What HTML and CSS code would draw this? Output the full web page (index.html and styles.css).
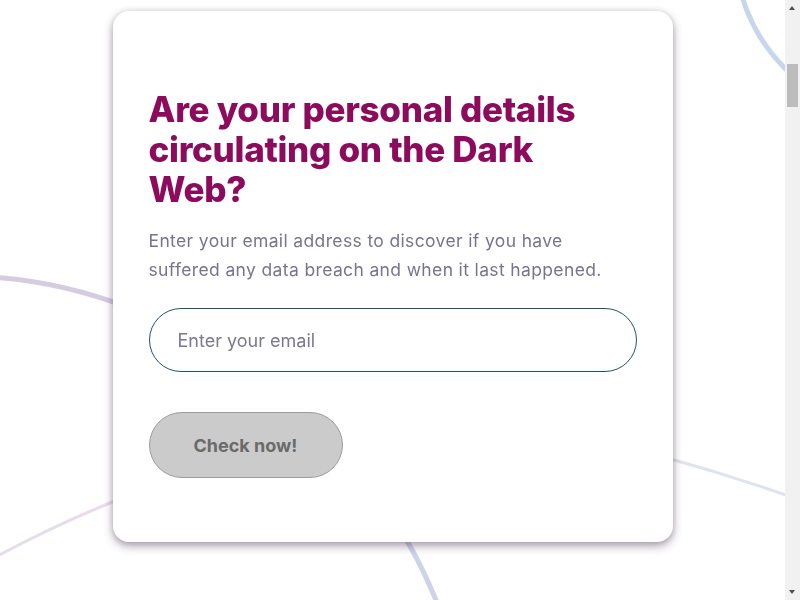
FILE: index.html
```html
<!DOCTYPE html>
<html lang="en">
<head>
<meta charset="utf-8">
<title>Dark Web Check</title>
<link rel="stylesheet" href="styles.css">
</head>
<body>
<svg class="rings" width="800" height="600" viewBox="0 0 800 600" aria-hidden="true">
  <circle cx="905" cy="-52" r="170" fill="none" stroke="#c6d6ec" stroke-width="5"/>
  <path d="M-10 277 Q60 281 130 308" fill="none" stroke="#d6cce2" stroke-width="5"/>
  <path d="M130 495 Q60 522 -10 560" fill="none" stroke="#e8dbea" stroke-width="3"/>
  <path d="M400 530 Q420 560 440 610" fill="none" stroke="#cdd3e8" stroke-width="5"/>
  <path d="M660 456 Q730 475 800 500" fill="none" stroke="#dde4f0" stroke-width="3"/>
</svg>
<main class="page">
  <section class="card">
    <h1 class="title">Are your personal details circulating on the Dark Web?</h1>
    <p class="lead">Enter your email address to discover if you have suffered any data breach and when it last happened.</p>
    <form class="check-form">
      <input class="email" type="email" placeholder="Enter your email" autofocus>
      <button class="submit" type="button">Check now!</button>
    </form>
  </section>
</main>
<div class="scrollbar" aria-hidden="true">
  <span class="arrow arrow-up"></span>
  <span class="thumb"></span>
  <span class="arrow arrow-down"></span>
</div>
</body>
</html>
```

FILE: styles.css
```css
html, body {
  margin: 0;
  padding: 0;
  background: #ffffff;
  height: 600px;
  overflow: hidden;
}

body {
  font-family: Inter, "Noto Sans", sans-serif;
}

.rings {
  position: fixed;
  left: 0;
  top: 0;
  z-index: 0;
}

.page {
  position: relative;
  z-index: 1;
  width: 785px;
  display: flex;
  justify-content: center;
  padding-top: 11px;
}

.card {
  width: 560px;
  box-sizing: border-box;
  background: #ffffff;
  border-radius: 16px;
  box-shadow: 0 4px 10px rgba(70, 45, 80, 0.45), 0 0 6px rgba(0, 0, 0, 0.12);
  padding: 78px 36px 64px 36px;
}

.title {
  margin: 0;
  font-size: 35px;
  line-height: 40px;
  font-weight: 800;
  color: #8c0b5d;
  letter-spacing: -0.3px;
}

.lead {
  margin: 17px 0 0 0;
  font-size: 17.5px;
  line-height: 29px;
  letter-spacing: 0.36px;
  color: #77758e;
}

.check-form {
  display: flex;
  flex-direction: column;
  align-items: flex-start;
  gap: 40px;
  margin-top: 24px;
}

.email {
  width: 488px;
  height: 64px;
  box-sizing: border-box;
  border: 1px solid #1f5472;
  border-radius: 32px;
  padding: 0 28px;
  font-family: Inter, "Noto Sans", sans-serif;
  font-size: 18px;
  color: #333;
  outline: none;
  background: #fff;
  caret-color: #1a1a3a;
}

.email::placeholder {
  color: #7b7891;
}

.submit {
  width: 194px;
  height: 66px;
  box-sizing: border-box;
  border: 1px solid #9c9c9c;
  border-radius: 33px;
  background: #cbcbcb;
  color: #6a6a6a;
  font-family: Inter, "Noto Sans", sans-serif;
  font-size: 18px;
  font-weight: 700;
  letter-spacing: 0;
  cursor: pointer;
}

.scrollbar {
  position: fixed;
  top: 0;
  right: 0;
  width: 15px;
  height: 600px;
  background: #f1f1f1;
  z-index: 2;
}

.thumb {
  position: absolute;
  left: 2px;
  top: 64px;
  width: 11px;
  height: 43px;
  background: #bcbcbc;
}

.arrow {
  position: absolute;
  left: 4px;
  width: 0;
  height: 0;
  border-left: 3.5px solid transparent;
  border-right: 3.5px solid transparent;
}

.arrow-up {
  top: 6px;
  border-bottom: 4px solid #505050;
}

.arrow-down {
  bottom: 6px;
  border-top: 4px solid #505050;
}
```
